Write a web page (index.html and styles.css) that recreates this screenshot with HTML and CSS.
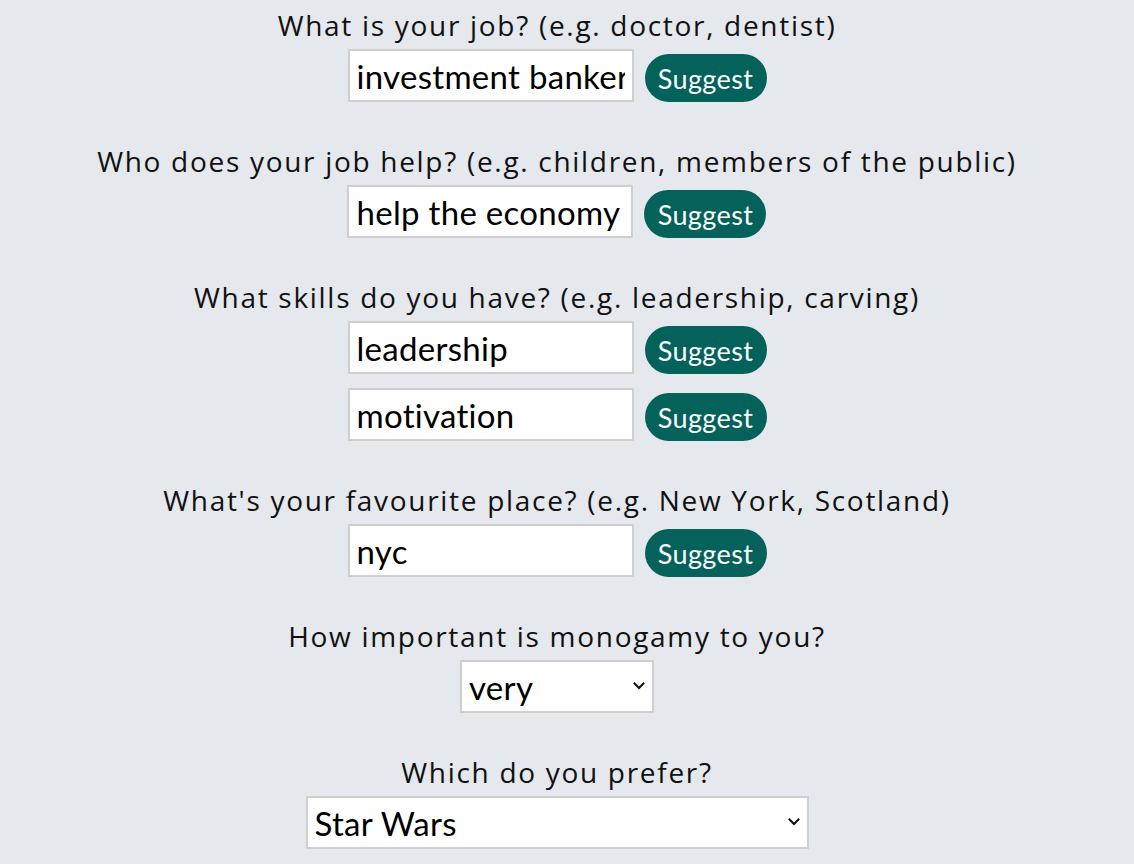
FILE: index.html
```html
<!DOCTYPE html>
<html>
<head>
<meta charset="utf-8">
<link rel="stylesheet" href="styles.css">
</head>
<body>
<main class="form">
  <section class="field">
    <label class="question">What is your job? (e.g. doctor, dentist)</label>
    <div class="row"><input class="text" type="text" value="investment banker"><button class="suggest">Suggest</button></div>
  </section>
  <section class="field">
    <label class="question">Who does your job help? (e.g. children, members of the public)</label>
    <div class="row"><input class="text" type="text" value="help the economy"><button class="suggest">Suggest</button></div>
  </section>
  <section class="field">
    <label class="question">What skills do you have? (e.g. leadership, carving)</label>
    <div class="row"><input class="text" type="text" value="leadership"><button class="suggest">Suggest</button></div>
    <div class="row"><input class="text" type="text" value="motivation"><button class="suggest">Suggest</button></div>
  </section>
  <section class="field">
    <label class="question">What's your favourite place? (e.g. New York, Scotland)</label>
    <div class="row"><input class="text" type="text" value="nyc"><button class="suggest">Suggest</button></div>
  </section>
  <section class="field">
    <label class="question">How important is monogamy to you?</label>
    <div class="row">
      <span class="select-wrap">
        <select class="choice choice-short"><option>very</option><option>somewhat</option><option>not at all</option></select>
        <svg class="chev" width="14" height="9" viewBox="0 0 14 9"><path d="M1.8 1.8 L7 7 L12.2 1.8" fill="none" stroke="#111" stroke-width="2"/></svg>
      </span>
    </div>
  </section>
  <section class="field">
    <label class="question">Which do you prefer?</label>
    <div class="row">
      <span class="select-wrap">
        <select class="choice choice-long"><option>Star Wars</option><option>Star Trek</option></select>
        <svg class="chev" width="14" height="9" viewBox="0 0 14 9"><path d="M1.8 1.8 L7 7 L12.2 1.8" fill="none" stroke="#111" stroke-width="2"/></svg>
      </span>
    </div>
  </section>
</main>
</body>
</html>
```

FILE: styles.css
```css
html, body {
  margin: 0;
  padding: 0;
  background: #e5e8ec;
}
body {
  overflow: hidden;
}
.form {
  width: 1114px;
  padding-top: 5px;
  display: flex;
  flex-direction: column;
  align-items: center;
}
.field {
  display: flex;
  flex-direction: column;
  align-items: center;
  margin-bottom: 25px;
}
.question {
  font-family: "Open Sans", sans-serif;
  font-weight: 400;
  font-size: 28px;
  letter-spacing: 1.7px;
  line-height: 40px;
  height: 40px;
  padding-bottom: 4px;
  color: #111;
  white-space: nowrap;
}
.row {
  display: flex;
  align-items: flex-end;
  gap: 11px;
  margin-bottom: 14px;
}
.text {
  box-sizing: border-box;
  width: 286px;
  height: 53px;
  border: 2px solid #cfcfcf;
  background: #fff;
  padding: 0 7px;
  font-family: "Lato", sans-serif;
  font-size: 33px;
  letter-spacing: 0.3px;
  color: #000;
  outline: none;
}
.suggest {
  box-sizing: border-box;
  width: 122px;
  height: 48px;
  border: none;
  border-radius: 24px;
  background: #04625b;
  color: #fff;
  font-family: "Lato", sans-serif;
  font-size: 27px;
  letter-spacing: 0.4px;
  padding: 0;
}
.select-wrap {
  position: relative;
  display: block;
}
.choice {
  display: block;
  box-sizing: border-box;
  height: 53px;
  border: 2px solid #cfcfcf;
  border-radius: 0;
  background: #fff;
  padding: 0 7px;
  font-family: "Lato", sans-serif;
  font-size: 33px;
  letter-spacing: 0.3px;
  color: #000;
  appearance: none;
  -webkit-appearance: none;
  outline: none;
}
.chev {
  position: absolute;
  right: 8px;
  top: 21px;
  pointer-events: none;
}
.choice-short { width: 194px; }
.choice-long { width: 503px; }
```
